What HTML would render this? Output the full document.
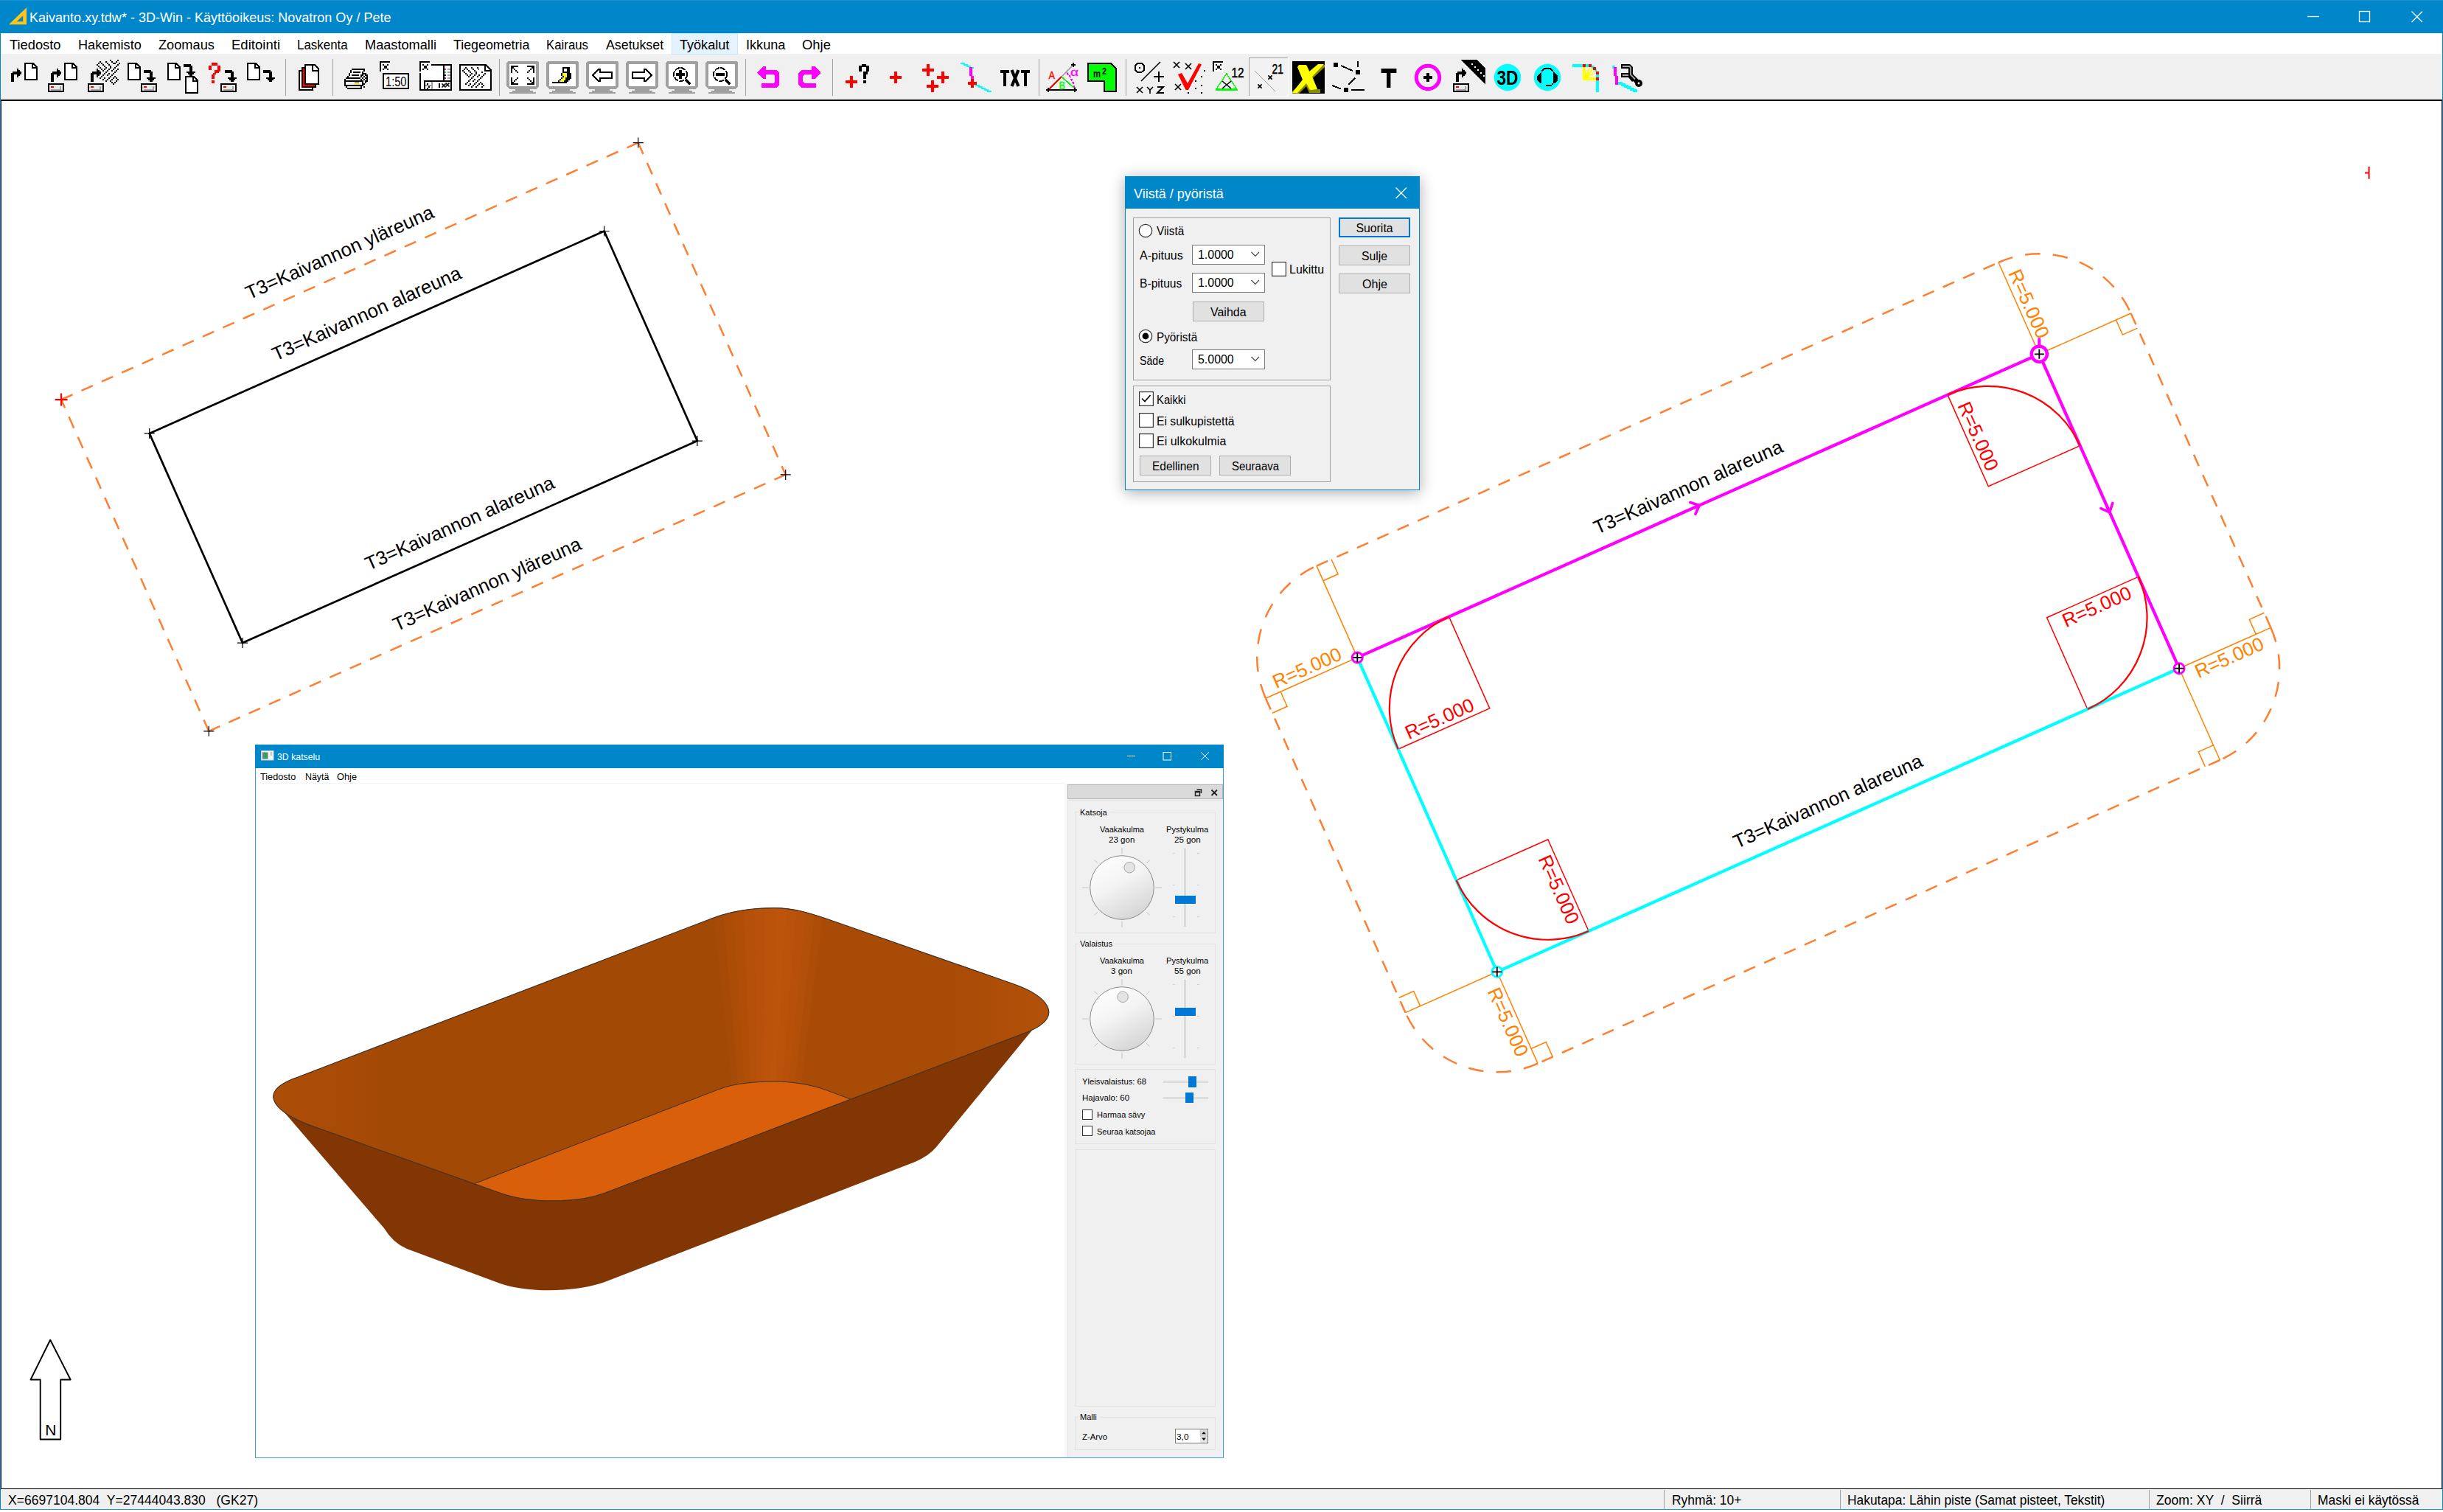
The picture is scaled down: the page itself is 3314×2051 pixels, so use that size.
<!DOCTYPE html>
<html lang="fi"><head><meta charset="utf-8"><title>3D-Win</title><style>
html,body{margin:0;padding:0;background:#fff;}
body{width:3314px;height:2051px;overflow:hidden;position:relative;font-family:"Liberation Sans",sans-serif;}
div,svg.abs,span.t{position:absolute;}
span.t{white-space:nowrap;line-height:1;transform-origin:0 0;display:block;}
svg{overflow:visible;}
svg text{font-family:"Liberation Sans",sans-serif;}
</style></head>
<body>
<div class="titlebar" style="left:0px;top:0px;width:3314px;height:45px;background:#0087c9;"></div><div style="left:0px;top:0px;width:3314px;height:1px;background:#1c92ce;"></div><svg class="abs" style="left:10px;top:8px" width="28" height="28" viewBox="0 0 28 28"><path d="M2 25.3 L26 2.3 L26 25.3 Z M12.6 21.3 L21.2 21.3 L21.2 13.2 Z" fill="#ffc61a" fill-rule="evenodd"/></svg><span class="t" style="left:40.40px;top:16.40px;font-size:17.6px;color:#fff;transform:scaleX(1.0244);">Kaivanto.xy.tdw* - 3D-Win - Käyttöoikeus: Novatron Oy / Pete</span><svg class="abs" style="left:3120px;top:8px" width="180" height="30" viewBox="0 0 180 30" fill="none" stroke="#fff" stroke-width="1.3"><path d="M10.2 14.5 H26"/><rect x="80.5" y="7.5" width="14" height="14"/><path d="M151.5 7.5 L166 22 M166 7.5 L151.5 22"/></svg><div class="menubar" style="left:0px;top:45px;width:3314px;height:28px;background:#fff;"></div><div class="toolbar" style="left:0px;top:73px;width:3314px;height:62px;background:#f0f0f0;"></div><div style="left:911px;top:45px;width:90px;height:29px;background:#e5f3ff;border:1px solid #cce8ff;box-sizing:border-box;"></div><span class="t" style="left:12.70px;top:53.30px;font-size:17.6px;transform:scaleX(1.0400);">Tiedosto</span><span class="t" style="left:105.70px;top:53.30px;font-size:17.6px;transform:scaleX(1.0324);">Hakemisto</span><span class="t" style="left:214.60px;top:53.30px;font-size:17.6px;transform:scaleX(1.0349);">Zoomaus</span><span class="t" style="left:313.70px;top:53.30px;font-size:17.6px;transform:scaleX(1.0544);">Editointi</span><span class="t" style="left:402.80px;top:53.30px;font-size:17.6px;transform:scaleX(0.9621);">Laskenta</span><span class="t" style="left:494.70px;top:53.30px;font-size:17.6px;transform:scaleX(1.0333);">Maastomalli</span><span class="t" style="left:614.90px;top:53.30px;font-size:17.6px;transform:scaleX(1.0124);">Tiegeometria</span><span class="t" style="left:741.40px;top:53.30px;font-size:17.6px;transform:scaleX(0.9555);">Kairaus</span><span class="t" style="left:821.60px;top:53.30px;font-size:17.6px;transform:scaleX(1.0108);">Asetukset</span><span class="t" style="left:922.40px;top:53.30px;font-size:17.6px;transform:scaleX(1.0270);">Työkalut</span><span class="t" style="left:1012.40px;top:53.30px;font-size:17.6px;transform:scaleX(1.0300);">Ikkuna</span><span class="t" style="left:1087.70px;top:53.30px;font-size:17.6px;transform:scaleX(1.0465);">Ohje</span><div class="canvas" style="left:1px;top:135px;width:3312px;height:1885px;background:#fff;border:1px solid #000;border-top-width:2px;box-sizing:border-box;"></div><div class="statusbar" style="left:0px;top:2020px;width:3314px;height:27px;background:#f0f0f0;"></div><div style="left:2257px;top:2021px;width:1px;height:26px;background:#a0a0a0;"></div><div style="left:2496px;top:2021px;width:1px;height:26px;background:#a0a0a0;"></div><div style="left:2915px;top:2021px;width:1px;height:26px;background:#a0a0a0;"></div><div style="left:3134px;top:2021px;width:1px;height:26px;background:#a0a0a0;"></div><span class="t" style="left:10.60px;top:2027.30px;font-size:17.6px;transform:scaleX(0.9967);white-space:pre;">X=6697104.804  Y=27444043.830   (GK27)</span><span class="t" style="left:2267.50px;top:2027.30px;font-size:17.6px;transform:scaleX(0.9899);">Ryhmä: 10+</span><span class="t" style="left:2506.40px;top:2027.30px;font-size:17.6px;transform:scaleX(0.9876);">Hakutapa: Lähin piste (Samat pisteet, Tekstit)</span><span class="t" style="left:2925.00px;top:2027.30px;font-size:17.6px;white-space:pre;">Zoom: XY  /  Siirrä</span><span class="t" style="left:3143.90px;top:2027.30px;font-size:17.6px;transform:scaleX(0.9896);">Maski ei käytössä</span><div style="left:0px;top:45px;width:1px;height:2003px;background:#0087c9;"></div><div style="left:3313px;top:45px;width:1px;height:2003px;background:#0087c9;"></div><div style="left:0px;top:2047px;width:3314px;height:1px;background:#1e93cf;"></div><div style="left:0px;top:2048px;width:3314px;height:3px;background:#fff;"></div><svg class="abs" style="left:0;top:0" width="2300" height="135" viewBox="0 0 2300 135" shape-rendering="crispEdges" font-family='"Liberation Sans", sans-serif'><rect x="15" y="99" width="4" height="12" fill="#000"/><rect x="17" y="97" width="7" height="4" fill="#000"/><rect x="23" y="93" width="2" height="12" fill="#000"/><rect x="25" y="95" width="2" height="8" fill="#000"/><rect x="27" y="97" width="2" height="4" fill="#000"/><polygon points="33,85 45,85 51,91 51,109 33,109" fill="#000" /><polygon points="35,87 44,87 49,92 49,107 35,107" fill="#fff" /><rect x="43" y="87" width="2" height="6" fill="#000"/><rect x="43" y="91" width="6" height="2" fill="#000"/><rect x="69" y="99" width="4" height="12" fill="#000"/><rect x="71" y="97" width="7" height="4" fill="#000"/><rect x="77" y="93" width="2" height="12" fill="#000"/><rect x="79" y="95" width="2" height="8" fill="#000"/><rect x="81" y="97" width="2" height="4" fill="#000"/><polygon points="87,85 99,85 105,91 105,109 87,109" fill="#000" /><polygon points="89,87 98,87 103,92 103,107 89,107" fill="#fff" /><rect x="97" y="87" width="2" height="6" fill="#000"/><rect x="97" y="91" width="6" height="2" fill="#000"/><rect x="65" y="113" width="22" height="12" fill="#000"/><rect x="67" y="115" width="18" height="8" fill="#e9e9e9"/><rect x="69" y="117" width="4" height="2" fill="#ff0000"/><rect x="69" y="121" width="14" height="2" fill="#a9a9a9"/><rect x="81" y="117" width="2" height="6" fill="#a9a9a9"/><path d="M135 83h2v2h-2zM143 83h2v2h-2zM151 83h2v2h-2zM157 83h2v2h-2zM133 85h2v2h-2zM137 85h2v2h-2zM145 85h2v2h-2zM153 85h2v2h-2zM155 85h2v2h-2zM131 87h2v2h-2zM139 87h2v2h-2zM147 87h2v2h-2zM133 89h2v2h-2zM141 89h2v2h-2zM149 89h2v2h-2zM157 89h2v2h-2zM135 91h2v2h-2zM143 91h2v2h-2zM149 91h2v2h-2zM137 93h2v2h-2zM141 93h2v2h-2zM147 93h2v2h-2zM153 93h2v2h-2zM159 93h2v2h-2zM139 95h2v2h-2zM145 95h2v2h-2zM151 95h2v2h-2zM157 95h2v2h-2zM143 97h2v2h-2zM155 97h2v2h-2zM141 99h2v2h-2zM147 99h2v2h-2zM153 99h2v2h-2zM139 101h2v2h-2zM145 101h2v2h-2zM151 101h2v2h-2zM137 103h2v2h-2zM149 103h2v2h-2zM155 103h2v2h-2zM135 105h2v2h-2zM141 105h2v2h-2zM147 105h2v2h-2zM153 105h2v2h-2zM157 105h2v2h-2zM139 107h2v2h-2zM145 107h2v2h-2zM151 107h2v2h-2zM159 107h2v2h-2zM143 109h2v2h-2zM149 109h2v2h-2zM157 109h2v2h-2zM149 81h2v2h-2zM159 81h2v2h-2zM161 85h2v2h-2zM159 87h2v2h-2zM155 91h2v2h-2zM151 111h2v2h-2zM155 111h2v2h-2zM153 113h2v2h-2z" fill="#000"/><rect x="123" y="99" width="4" height="12" fill="#000"/><rect x="125" y="97" width="7" height="4" fill="#000"/><rect x="131" y="93" width="2" height="12" fill="#000"/><rect x="133" y="95" width="2" height="8" fill="#000"/><rect x="135" y="97" width="2" height="4" fill="#000"/><rect x="119" y="113" width="22" height="12" fill="#000"/><rect x="121" y="115" width="18" height="8" fill="#e9e9e9"/><rect x="123" y="117" width="4" height="2" fill="#ff0000"/><rect x="123" y="121" width="14" height="2" fill="#a9a9a9"/><rect x="135" y="117" width="2" height="6" fill="#a9a9a9"/><polygon points="173,85 185,85 191,91 191,109 173,109" fill="#000" /><polygon points="175,87 184,87 189,92 189,107 175,107" fill="#fff" /><rect x="183" y="87" width="2" height="6" fill="#000"/><rect x="183" y="91" width="6" height="2" fill="#000"/><rect x="195" y="95" width="10" height="4" fill="#000"/><rect x="203" y="97" width="4" height="8" fill="#000"/><rect x="199" y="105" width="12" height="2" fill="#000"/><rect x="201" y="107" width="8" height="2" fill="#000"/><rect x="203" y="109" width="4" height="2" fill="#000"/><rect x="191" y="113" width="22" height="12" fill="#000"/><rect x="193" y="115" width="18" height="8" fill="#e9e9e9"/><rect x="195" y="117" width="4" height="2" fill="#ff0000"/><rect x="195" y="121" width="14" height="2" fill="#a9a9a9"/><rect x="207" y="117" width="2" height="6" fill="#a9a9a9"/><polygon points="227,85 239,85 245,91 245,109 227,109" fill="#000" /><polygon points="229,87 238,87 243,92 243,107 229,107" fill="#fff" /><rect x="237" y="87" width="2" height="6" fill="#000"/><rect x="237" y="91" width="6" height="2" fill="#000"/><rect x="249" y="87" width="10" height="4" fill="#000"/><rect x="257" y="89" width="4" height="8" fill="#000"/><rect x="253" y="97" width="12" height="2" fill="#000"/><rect x="255" y="99" width="8" height="2" fill="#000"/><rect x="257" y="101" width="4" height="2" fill="#000"/><polygon points="251,103 263,103 269,109 269,127 251,127" fill="#000" /><polygon points="253,105 262,105 267,110 267,125 253,125" fill="#fff" /><rect x="261" y="105" width="2" height="6" fill="#000"/><rect x="261" y="109" width="6" height="2" fill="#000"/><rect x="287" y="85" width="8" height="4" fill="#ff0000"/><rect x="283" y="89" width="4" height="6" fill="#ff0000"/><rect x="295" y="89" width="4" height="8" fill="#ff0000"/><rect x="291" y="95" width="6" height="4" fill="#ff0000"/><rect x="289" y="99" width="4" height="2" fill="#ff0000"/><rect x="287" y="101" width="4" height="6" fill="#ff0000"/><rect x="287" y="109" width="4" height="4" fill="#ff0000"/><rect x="305" y="95" width="10" height="4" fill="#000"/><rect x="313" y="97" width="4" height="8" fill="#000"/><rect x="309" y="105" width="12" height="2" fill="#000"/><rect x="311" y="107" width="8" height="2" fill="#000"/><rect x="313" y="109" width="4" height="2" fill="#000"/><rect x="299" y="113" width="22" height="12" fill="#000"/><rect x="301" y="115" width="18" height="8" fill="#e9e9e9"/><rect x="303" y="117" width="4" height="2" fill="#ff0000"/><rect x="303" y="121" width="14" height="2" fill="#a9a9a9"/><rect x="315" y="117" width="2" height="6" fill="#a9a9a9"/><polygon points="335,85 347,85 353,91 353,109 335,109" fill="#000" /><polygon points="337,87 346,87 351,92 351,107 337,107" fill="#fff" /><rect x="345" y="87" width="2" height="6" fill="#000"/><rect x="345" y="91" width="6" height="2" fill="#000"/><rect x="357" y="95" width="10" height="4" fill="#000"/><rect x="365" y="97" width="4" height="8" fill="#000"/><rect x="361" y="105" width="12" height="2" fill="#000"/><rect x="363" y="107" width="8" height="2" fill="#000"/><rect x="365" y="109" width="4" height="2" fill="#000"/><rect x="387" y="80" width="1" height="50" fill="#a0a0a0"/><polygon points="405,95 419,95 425,101 425,123 405,123" fill="#000" /><polygon points="407,97 418,97 423,102 423,121 407,121" fill="#fff" /><rect x="415" y="97" width="2" height="8" fill="#000"/><rect x="415" y="103" width="8" height="2" fill="#000"/><polygon points="417,97 418,97 423,102 423,103 417,103" fill="#fff" /><polygon points="409,91 423,91 429,97 429,119 409,119" fill="#000" /><polygon points="411,93 422,93 427,98 427,117 411,117" fill="#ff0000" /><rect x="419" y="93" width="2" height="8" fill="#000"/><rect x="419" y="99" width="8" height="2" fill="#000"/><polygon points="421,93 422,93 427,98 427,99 421,99" fill="#fff" /><polygon points="413,87 427,87 433,93 433,115 413,115" fill="#000" /><polygon points="415,89 426,89 431,94 431,113 415,113" fill="#fff" /><rect x="423" y="89" width="2" height="8" fill="#000"/><rect x="423" y="95" width="8" height="2" fill="#000"/><polygon points="425,89 426,89 431,94 431,95 425,95" fill="#fff" /><rect x="451" y="80" width="1" height="50" fill="#a0a0a0"/><path d="M477 93h2v2h-2zM479 93h2v2h-2zM481 93h2v2h-2zM483 93h2v2h-2zM485 93h2v2h-2zM487 93h2v2h-2zM489 93h2v2h-2zM491 93h2v2h-2zM493 93h2v2h-2zM475 95h2v2h-2zM493 95h2v2h-2zM475 97h2v2h-2zM479 97h2v2h-2zM481 97h2v2h-2zM483 97h2v2h-2zM485 97h2v2h-2zM487 97h2v2h-2zM491 97h2v2h-2zM473 99h2v2h-2zM491 99h2v2h-2zM493 99h2v2h-2zM495 99h2v2h-2zM473 101h2v2h-2zM477 101h2v2h-2zM479 101h2v2h-2zM481 101h2v2h-2zM483 101h2v2h-2zM485 101h2v2h-2zM489 101h2v2h-2zM491 101h2v2h-2zM495 101h2v2h-2zM497 101h2v2h-2zM471 103h2v2h-2zM489 103h2v2h-2zM493 103h2v2h-2zM497 103h2v2h-2zM469 105h2v2h-2zM471 105h2v2h-2zM473 105h2v2h-2zM475 105h2v2h-2zM477 105h2v2h-2zM479 105h2v2h-2zM481 105h2v2h-2zM483 105h2v2h-2zM485 105h2v2h-2zM487 105h2v2h-2zM491 105h2v2h-2zM495 105h2v2h-2zM497 105h2v2h-2zM467 107h2v2h-2zM489 107h2v2h-2zM493 107h2v2h-2zM497 107h2v2h-2zM467 109h2v2h-2zM469 109h2v2h-2zM471 109h2v2h-2zM473 109h2v2h-2zM475 109h2v2h-2zM477 109h2v2h-2zM479 109h2v2h-2zM481 109h2v2h-2zM483 109h2v2h-2zM485 109h2v2h-2zM487 109h2v2h-2zM489 109h2v2h-2zM491 109h2v2h-2zM495 109h2v2h-2zM497 109h2v2h-2zM467 111h2v2h-2zM491 111h2v2h-2zM495 111h2v2h-2zM467 113h2v2h-2zM491 113h2v2h-2zM493 113h2v2h-2zM467 115h2v2h-2zM469 115h2v2h-2zM471 115h2v2h-2zM473 115h2v2h-2zM475 115h2v2h-2zM477 115h2v2h-2zM479 115h2v2h-2zM481 115h2v2h-2zM483 115h2v2h-2zM485 115h2v2h-2zM487 115h2v2h-2zM489 115h2v2h-2zM491 115h2v2h-2zM469 117h2v2h-2zM489 117h2v2h-2zM493 117h2v2h-2zM471 119h2v2h-2zM473 119h2v2h-2zM475 119h2v2h-2zM477 119h2v2h-2zM479 119h2v2h-2zM481 119h2v2h-2zM483 119h2v2h-2zM485 119h2v2h-2zM487 119h2v2h-2zM489 119h2v2h-2z" fill="#000"/><path d="M477 95h2v2h-2zM479 95h2v2h-2zM481 95h2v2h-2zM483 95h2v2h-2zM485 95h2v2h-2zM487 95h2v2h-2zM489 95h2v2h-2zM491 95h2v2h-2zM477 97h2v2h-2zM489 97h2v2h-2zM475 99h2v2h-2zM477 99h2v2h-2zM479 99h2v2h-2zM481 99h2v2h-2zM483 99h2v2h-2zM485 99h2v2h-2zM487 99h2v2h-2zM489 99h2v2h-2zM475 101h2v2h-2zM487 101h2v2h-2zM493 101h2v2h-2zM473 103h2v2h-2zM475 103h2v2h-2zM477 103h2v2h-2zM479 103h2v2h-2zM481 103h2v2h-2zM483 103h2v2h-2zM485 103h2v2h-2zM487 103h2v2h-2zM491 103h2v2h-2zM495 103h2v2h-2zM489 105h2v2h-2zM493 105h2v2h-2zM469 107h2v2h-2zM471 107h2v2h-2zM473 107h2v2h-2zM475 107h2v2h-2zM477 107h2v2h-2zM479 107h2v2h-2zM481 107h2v2h-2zM483 107h2v2h-2zM485 107h2v2h-2zM487 107h2v2h-2zM491 107h2v2h-2zM495 107h2v2h-2zM493 109h2v2h-2zM493 111h2v2h-2zM493 115h2v2h-2zM471 117h2v2h-2zM473 117h2v2h-2zM475 117h2v2h-2zM477 117h2v2h-2zM479 117h2v2h-2zM481 117h2v2h-2zM483 117h2v2h-2zM485 117h2v2h-2zM487 117h2v2h-2zM491 117h2v2h-2z" fill="#fff"/><path d="M469 111h2v2h-2zM471 111h2v2h-2zM473 111h2v2h-2zM475 111h2v2h-2zM477 111h2v2h-2zM479 111h2v2h-2zM487 111h2v2h-2zM489 111h2v2h-2zM469 113h2v2h-2zM471 113h2v2h-2zM473 113h2v2h-2zM475 113h2v2h-2zM477 113h2v2h-2zM479 113h2v2h-2zM487 113h2v2h-2zM489 113h2v2h-2z" fill="#f2f2f2"/><path d="M481 111h2v2h-2zM483 111h2v2h-2zM485 111h2v2h-2z" fill="#9a9aa6"/><path d="M481 113h2v2h-2zM483 113h2v2h-2zM485 113h2v2h-2z" fill="#ffff00"/><rect x="517" y="85" width="12" height="12" fill="#fdfdfd"/><rect x="515" y="83" width="14" height="2" fill="#000"/><rect x="515" y="83" width="2" height="14" fill="#000"/><rect x="521" y="89" width="4" height="4" fill="#000"/><rect x="519" y="87" width="2" height="2" fill="#000"/><rect x="525" y="87" width="2" height="2" fill="#000"/><rect x="519" y="93" width="2" height="2" fill="#000"/><rect x="525" y="93" width="2" height="2" fill="#000"/><rect x="519" y="99" width="36" height="22" fill="#000"/><rect x="521" y="101" width="32" height="18" fill="#fff"/><text x="523" y="117" font-size="19" font-weight="normal" fill="#000" textLength="28.5" lengthAdjust="spacingAndGlyphs" shape-rendering="auto" >1:50</text><rect x="569" y="87" width="44" height="36" fill="#000"/><rect x="571" y="89" width="40" height="32" fill="#fff"/><rect x="571" y="85" width="12" height="12" fill="#fdfdfd"/><rect x="569" y="83" width="14" height="2" fill="#000"/><rect x="569" y="83" width="2" height="14" fill="#000"/><rect x="575" y="89" width="4" height="4" fill="#000"/><rect x="573" y="87" width="2" height="2" fill="#000"/><rect x="579" y="87" width="2" height="2" fill="#000"/><rect x="573" y="93" width="2" height="2" fill="#000"/><rect x="579" y="93" width="2" height="2" fill="#000"/><rect x="569" y="97" width="2" height="2" fill="#f0f0f0"/><rect x="583" y="85" width="2" height="4" fill="#f0f0f0"/><rect x="601" y="89" width="2" height="20" fill="#000"/><rect x="603" y="93" width="2" height="2" fill="#ff00ff"/><rect x="607" y="93" width="4" height="2" fill="#a0a0a0"/><rect x="603" y="97" width="2" height="2" fill="#00ff00"/><rect x="607" y="97" width="4" height="2" fill="#a0a0a0"/><rect x="603" y="101" width="2" height="2" fill="#0000ff"/><rect x="607" y="101" width="4" height="2" fill="#a0a0a0"/><rect x="603" y="105" width="2" height="2" fill="#ff0000"/><rect x="607" y="105" width="4" height="2" fill="#a0a0a0"/><rect x="575" y="109" width="36" height="2" fill="#000"/><rect x="575" y="109" width="2" height="12" fill="#000"/><rect x="585" y="111" width="2" height="10" fill="#a0a0a0"/><rect x="579" y="113" width="2" height="2" fill="#000"/><rect x="577" y="115" width="8" height="2" fill="#a0a0a0"/><rect x="581" y="117" width="2" height="2" fill="#000"/><rect x="579" y="119" width="2" height="2" fill="#000"/><rect x="595" y="113" width="2" height="6" fill="#000"/><path d="M599.5 113.5L604.5 118.5M604.5 113.5L599.5 118.5" fill="none" stroke="#000" stroke-width="1.7" shape-rendering="auto"/><path d="M604.5 112.5L609.5 117.5M609.5 112.5L604.5 117.5" fill="none" stroke="#000" stroke-width="1.7" shape-rendering="auto"/><polygon points="623,87 659,87 667,95 667,123 623,123" fill="#000" /><polygon points="625,89 658,89 665,96 665,121 625,121" fill="#fff" /><rect x="657" y="89" width="2" height="8" fill="#000"/><rect x="657" y="95" width="8" height="2" fill="#000"/><path d="M631 91h2v2h-2zM639 91h2v2h-2zM647 91h2v2h-2zM653 91h2v2h-2zM629 93h2v2h-2zM633 93h2v2h-2zM641 93h2v2h-2zM649 93h2v2h-2zM651 93h2v2h-2zM627 95h2v2h-2zM635 95h2v2h-2zM643 95h2v2h-2zM629 97h2v2h-2zM637 97h2v2h-2zM645 97h2v2h-2zM653 97h2v2h-2zM631 99h2v2h-2zM639 99h2v2h-2zM645 99h2v2h-2zM657 99h2v2h-2zM633 101h2v2h-2zM637 101h2v2h-2zM643 101h2v2h-2zM649 101h2v2h-2zM655 101h2v2h-2zM635 103h2v2h-2zM641 103h2v2h-2zM647 103h2v2h-2zM653 103h2v2h-2zM639 105h2v2h-2zM651 105h2v2h-2zM637 107h2v2h-2zM643 107h2v2h-2zM649 107h2v2h-2zM635 109h2v2h-2zM641 109h2v2h-2zM647 109h2v2h-2zM633 111h2v2h-2zM645 111h2v2h-2zM651 111h2v2h-2zM631 113h2v2h-2zM637 113h2v2h-2zM643 113h2v2h-2zM649 113h2v2h-2zM653 113h2v2h-2zM635 115h2v2h-2zM641 115h2v2h-2zM647 115h2v2h-2zM655 115h2v2h-2zM639 117h2v2h-2zM645 117h2v2h-2zM653 117h2v2h-2z" fill="#000"/><rect x="650" y="89" width="9" height="8" fill="#fff"/><rect x="657" y="89" width="2" height="8" fill="#000"/><rect x="657" y="95" width="8" height="2" fill="#000"/><rect x="677" y="80" width="1" height="50" fill="#a0a0a0"/><polygon points="689,83 729,83 731,85 731,117 727,121 691,121 687,117 687,85" fill="#a0a0a0" /><rect x="691" y="87" width="36" height="30" fill="#fff"/><rect x="699" y="121" width="20" height="2" fill="#a0a0a0"/><rect x="695" y="123" width="28" height="2" fill="#a0a0a0"/><rect x="691" y="125" width="36" height="2" fill="#a0a0a0"/><polygon points="743,83 783,83 785,85 785,117 781,121 745,121 741,117 741,85" fill="#a0a0a0" /><rect x="745" y="87" width="36" height="30" fill="#fff"/><rect x="753" y="121" width="20" height="2" fill="#a0a0a0"/><rect x="749" y="123" width="28" height="2" fill="#a0a0a0"/><rect x="745" y="125" width="36" height="2" fill="#a0a0a0"/><polygon points="797,83 837,83 839,85 839,117 835,121 799,121 795,117 795,85" fill="#a0a0a0" /><rect x="799" y="87" width="36" height="30" fill="#fff"/><rect x="807" y="121" width="20" height="2" fill="#a0a0a0"/><rect x="803" y="123" width="28" height="2" fill="#a0a0a0"/><rect x="799" y="125" width="36" height="2" fill="#a0a0a0"/><polygon points="851,83 891,83 893,85 893,117 889,121 853,121 849,117 849,85" fill="#a0a0a0" /><rect x="853" y="87" width="36" height="30" fill="#fff"/><rect x="861" y="121" width="20" height="2" fill="#a0a0a0"/><rect x="857" y="123" width="28" height="2" fill="#a0a0a0"/><rect x="853" y="125" width="36" height="2" fill="#a0a0a0"/><polygon points="905,83 945,83 947,85 947,117 943,121 907,121 903,117 903,85" fill="#a0a0a0" /><rect x="907" y="87" width="36" height="30" fill="#fff"/><rect x="915" y="121" width="20" height="2" fill="#a0a0a0"/><rect x="911" y="123" width="28" height="2" fill="#a0a0a0"/><rect x="907" y="125" width="36" height="2" fill="#a0a0a0"/><polygon points="959,83 999,83 1001,85 1001,117 997,121 961,121 957,117 957,85" fill="#a0a0a0" /><rect x="961" y="87" width="36" height="30" fill="#fff"/><rect x="969" y="121" width="20" height="2" fill="#a0a0a0"/><rect x="965" y="123" width="28" height="2" fill="#a0a0a0"/><rect x="961" y="125" width="36" height="2" fill="#a0a0a0"/><rect x="693" y="89" width="10" height="2" fill="#000"/><rect x="693" y="89" width="2" height="10" fill="#000"/><rect x="695" y="91" width="2" height="2" fill="#000"/><rect x="697" y="93" width="2" height="2" fill="#000"/><rect x="699" y="95" width="2" height="2" fill="#000"/><rect x="701" y="97" width="2" height="2" fill="#000"/><rect x="715" y="89" width="10" height="2" fill="#000"/><rect x="723" y="89" width="2" height="10" fill="#000"/><rect x="721" y="91" width="2" height="2" fill="#000"/><rect x="719" y="93" width="2" height="2" fill="#000"/><rect x="717" y="95" width="2" height="2" fill="#000"/><rect x="715" y="97" width="2" height="2" fill="#000"/><rect x="693" y="113" width="10" height="2" fill="#000"/><rect x="693" y="105" width="2" height="10" fill="#000"/><rect x="695" y="111" width="2" height="2" fill="#000"/><rect x="697" y="109" width="2" height="2" fill="#000"/><rect x="699" y="107" width="2" height="2" fill="#000"/><rect x="701" y="105" width="2" height="2" fill="#000"/><rect x="715" y="113" width="10" height="2" fill="#000"/><rect x="723" y="105" width="2" height="10" fill="#000"/><rect x="721" y="111" width="2" height="2" fill="#000"/><rect x="719" y="109" width="2" height="2" fill="#000"/><rect x="717" y="107" width="2" height="2" fill="#000"/><rect x="715" y="105" width="2" height="2" fill="#000"/><rect x="763" y="91" width="10" height="8" fill="#000"/><rect x="765" y="93" width="4" height="4" fill="#fff"/><polygon points="761,99 775,99 775,107 773,107 773,109 771,109 771,111 769,111 769,113 749,113 749,111 757,111 757,109 759,109 759,107 761,107 761,105 763,105 763,103 761,103" fill="#000" /><polygon points="763,99 769,99 769,105 767,105 767,109 765,109 765,111 759,111 759,109 761,109 761,107 763,107 763,105 765,105 765,103 763,103" fill="#ffff00" /><polygon points="804,102 812,94 814,94 814,98 829.7,98 829.7,106 814,106 814,110 812,110" fill="#fff" stroke="#000" stroke-width="2" stroke-linejoin="miter"/><polygon points="884,102 876,94 874,94 874,98 858.3,98 858.3,106 874,106 874,110 876,110" fill="#fff" stroke="#000" stroke-width="2" stroke-linejoin="miter"/><circle cx="923" cy="101" r="9" fill="#fff" stroke="#000" stroke-width="2" stroke-dasharray="7 1.5"/><path d="M930 108L936.5 114.5" fill="none" stroke="#000" stroke-width="4.2" /><rect x="917" y="99" width="12" height="4" fill="#000"/><rect x="921" y="95" width="4" height="12" fill="#000"/><circle cx="977" cy="101" r="9" fill="#fff" stroke="#000" stroke-width="2" stroke-dasharray="7 1.5"/><path d="M984 108L990.5 114.5" fill="none" stroke="#000" stroke-width="4.2" /><rect x="971" y="99" width="12" height="4" fill="#000"/><rect x="1011" y="80" width="1" height="50" fill="#a0a0a0"/><polygon points="1027,98 1029,96 1031,94 1033,92 1035,90 1039,90 1039,95 1053,95 1057,99 1057,115 1053,119 1033,119 1033,113 1049,113 1051,111 1051,103 1049,101 1039,101 1039,107 1035,107 1033,105 1031,103 1029,101 1027,99" fill="#ff00ff" /><polygon points="1113,98 1111,96 1109,94 1107,92 1105,90 1101,90 1101,95 1087,95 1083,99 1083,115 1087,119 1107,119 1107,113 1091,113 1089,111 1089,103 1091,101 1101,101 1101,107 1105,107 1107,105 1109,103 1111,101 1113,99" fill="#ff00ff" /><rect x="1129" y="80" width="1" height="50" fill="#a0a0a0"/><rect x="1153.0" y="103" width="4" height="16" fill="#ff0000"/><rect x="1147" y="109.0" width="16" height="4" fill="#ff0000"/><rect x="1169" y="87" width="6" height="4" fill="#000"/><rect x="1165" y="89" width="4" height="8" fill="#000"/><rect x="1175" y="89" width="4" height="8" fill="#000"/><rect x="1171" y="97" width="6" height="4" fill="#000"/><rect x="1171" y="101" width="4" height="6" fill="#000"/><rect x="1171" y="109" width="4" height="4" fill="#000"/><rect x="1213.0" y="97" width="4" height="16" fill="#ff0000"/><rect x="1207" y="103.0" width="16" height="4" fill="#ff0000"/><rect x="1257.0" y="87" width="4" height="16" fill="#ff0000"/><rect x="1251" y="93.0" width="16" height="4" fill="#ff0000"/><rect x="1277.0" y="97" width="4" height="16" fill="#ff0000"/><rect x="1271" y="103.0" width="16" height="4" fill="#ff0000"/><rect x="1263.0" y="109" width="4" height="16" fill="#ff0000"/><rect x="1257" y="115.0" width="16" height="4" fill="#ff0000"/><rect x="1303" y="85" width="6" height="2" fill="#00ffff"/><rect x="1307" y="87" width="6" height="2" fill="#00ffff"/><rect x="1311" y="89" width="6" height="2" fill="#00ffff"/><rect x="1315" y="91" width="6" height="2" fill="#00ffff"/><rect x="1315" y="91" width="4" height="12" fill="#ff00ff"/><rect x="1317" y="103" width="4" height="4" fill="#ff00ff"/><rect x="1317.0" y="107" width="4" height="12" fill="#ff0000"/><rect x="1313" y="111.0" width="12" height="4" fill="#ff0000"/><rect x="1323" y="115" width="6" height="2" fill="#00ffff"/><rect x="1327" y="117" width="6" height="2" fill="#00ffff"/><rect x="1331" y="119" width="6" height="2" fill="#00ffff"/><rect x="1335" y="121" width="6" height="2" fill="#00ffff"/><rect x="1339" y="123" width="6" height="2" fill="#00ffff"/><rect x="1357" y="95" width="12" height="4" fill="#000"/><rect x="1361" y="95" width="4" height="22" fill="#000"/><rect x="1385" y="95" width="12" height="4" fill="#000"/><rect x="1389" y="95" width="4" height="22" fill="#000"/><path d="M1372.5 95L1381.5 117M1381.5 95L1372.5 117" fill="none" stroke="#000" stroke-width="4.2" shape-rendering="auto"/><rect x="1409" y="80" width="1" height="50" fill="#a0a0a0"/><rect x="1419" y="121" width="42" height="2" fill="#000"/><rect x="1421" y="119" width="2" height="6" fill="#000"/><rect x="1457" y="119" width="2" height="6" fill="#000"/><rect x="1453" y="87" width="6" height="2" fill="#000"/><rect x="1455" y="85" width="2" height="6" fill="#000"/><path d="M1423 121L1440 104" fill="none" stroke="#ff0000" stroke-width="1.8" /><path d="M1441 103L1454 90" fill="none" stroke="#909090" stroke-width="1.5" shape-rendering="auto"/><path d="M1441 105L1457 119" fill="none" stroke="#00ff00" stroke-width="1.8" /><path d="M1447 99Q1455 106 1458 120" fill="none" stroke="#ff00ff" stroke-width="2" stroke-dasharray="3 2"/><text x="1422.5" y="106.7" font-size="15.5" font-weight="normal" fill="#ff0000" textLength="8.5" lengthAdjust="spacingAndGlyphs" shape-rendering="auto" stroke="#ff0000" stroke-width="0.4">A</text><text x="1436.5" y="120.8" font-size="15.5" font-weight="normal" fill="#00ff00" textLength="8.5" lengthAdjust="spacingAndGlyphs" shape-rendering="auto" stroke="#00ff00" stroke-width="0.4">B</text><text x="1452" y="103" font-size="15" font-weight="normal" fill="#ff00ff" textLength="11" lengthAdjust="spacingAndGlyphs" shape-rendering="auto" stroke="#ff00ff" stroke-width="0.3">α</text><polygon points="1476,86 1507,86 1514,93 1514,124 1498,124 1498,110 1476,110" fill="#00ff00" stroke="#000" stroke-width="2" /><text x="1483" y="104.8" font-size="14.5" font-weight="bold" fill="#000" textLength="10" lengthAdjust="spacingAndGlyphs" shape-rendering="auto" >m</text><text x="1495" y="100.6" font-size="12.5" font-weight="bold" fill="#000" textLength="6" lengthAdjust="spacingAndGlyphs" shape-rendering="auto" >2</text><rect x="1527" y="80" width="1" height="50" fill="#a0a0a0"/><circle cx="1546" cy="92" r="6.5" fill="none" stroke="#000" stroke-width="2"/><rect x="1545" y="91" width="2" height="2" fill="#000"/><path d="M1574 84L1548 110" fill="none" stroke="#000" stroke-width="1.6" shape-rendering="auto"/><rect x="1565" y="103" width="14" height="2" fill="#000"/><rect x="1571" y="97" width="2" height="14" fill="#000"/><path d="M1542 118L1550 126M1550 118L1542 126" fill="none" stroke="#000" stroke-width="1.6" shape-rendering="auto"/><path d="M1556 118L1560 122L1564 118M1560 122V127" fill="none" stroke="#000" stroke-width="1.6" shape-rendering="auto"/><path d="M1570 118H1578L1570 126H1579" fill="none" stroke="#000" stroke-width="2" shape-rendering="auto"/><path d="M1592 84L1600 92M1600 84L1592 92" fill="none" stroke="#000" stroke-width="1.7" shape-rendering="auto"/><path d="M1608 86L1616 94M1616 86L1608 94" fill="none" stroke="#000" stroke-width="1.7" shape-rendering="auto"/><path d="M1594 114L1602 122M1602 114L1594 122" fill="none" stroke="#000" stroke-width="1.7" shape-rendering="auto"/><rect x="1633" y="95" width="2" height="2" fill="#000"/><rect x="1629" y="103" width="2" height="2" fill="#000"/><rect x="1621" y="109" width="2" height="2" fill="#000"/><rect x="1629" y="115" width="2" height="2" fill="#000"/><rect x="1621" y="119" width="2" height="2" fill="#000"/><rect x="1611" y="125" width="2" height="2" fill="#000"/><rect x="1629" y="125" width="2" height="2" fill="#000"/><path d="M1598 101L1603 99L1611 113L1626 86L1630 87.5L1612 122L1608.5 122Z" fill="#ff0000" shape-rendering="auto"/><rect x="1647" y="85" width="12" height="12" fill="#fdfdfd"/><rect x="1645" y="83" width="14" height="2" fill="#000"/><rect x="1645" y="83" width="2" height="14" fill="#000"/><rect x="1651" y="89" width="4" height="4" fill="#000"/><rect x="1649" y="87" width="2" height="2" fill="#000"/><rect x="1655" y="87" width="2" height="2" fill="#000"/><rect x="1649" y="93" width="2" height="2" fill="#000"/><rect x="1655" y="93" width="2" height="2" fill="#000"/><path d="M1664 100L1650 121H1678Z" fill="none" stroke="#00ff00" stroke-width="1.4" /><rect x="1649" y="121" width="30" height="2" fill="#00ff00"/><path d="M1658 110L1670 120M1670 110L1658 120" fill="none" stroke="#000" stroke-width="1.6" shape-rendering="auto"/><text x="1670.5" y="104.7" font-size="19" font-weight="normal" fill="#000" textLength="17" lengthAdjust="spacingAndGlyphs" shape-rendering="auto" stroke="#000" stroke-width="0.5">12</text><rect x="1694" y="78" width="53" height="53" fill="#f2f2f2"/><rect x="1694" y="78" width="53" height="1" fill="#a0a0a0"/><rect x="1694" y="78" width="1" height="53" fill="#a0a0a0"/><rect x="1694" y="130" width="54" height="1" fill="#fff"/><rect x="1747" y="78" width="1" height="53" fill="#fff"/><path d="M1702 96L1730 124" fill="none" stroke="#a0a0a0" stroke-width="1.4" /><path d="M1720.4 102.4L1725.6 107.6M1725.6 102.4L1720.4 107.6" fill="none" stroke="#000" stroke-width="1.7" shape-rendering="auto"/><path d="M1706.4 114.4L1711.6 119.6M1711.6 114.4L1706.4 119.6" fill="none" stroke="#000" stroke-width="1.7" shape-rendering="auto"/><text x="1725.5" y="99.5" font-size="18.5" font-weight="normal" fill="#000" textLength="15.5" lengthAdjust="spacingAndGlyphs" shape-rendering="auto" stroke="#000" stroke-width="0.5">21</text><rect x="1753" y="83" width="44" height="44" fill="#000"/><path d="M1763 89L1773 89L1777 98L1789 88L1797 88L1797 91L1781 106L1787 121L1791 121L1791 126L1776 126L1772 117L1762 127L1753 127L1753 124L1768 109L1761 92Z" fill="#8a8a00" shape-rendering="auto"/><path d="M1762 88L1772 88L1776 97L1788 87L1796 87L1780 104L1787 121L1777 122L1772 113L1760 126L1753 126L1767 108L1760 91Z" fill="#ffff00" shape-rendering="auto"/><rect x="1809" y="85" width="6" height="6" fill="#000"/><rect x="1839" y="95" width="6" height="6" fill="#000"/><rect x="1823" y="119" width="6" height="6" fill="#000"/><path d="M1819 89L1835 96" fill="none" stroke="#000" stroke-width="2" /><rect x="1841" y="83" width="2" height="8" fill="#000"/><path d="M1838 106L1829 115" fill="none" stroke="#000" stroke-width="2" /><path d="M1807 116L1819 120.5" fill="none" stroke="#000" stroke-width="2" /><rect x="1833" y="121" width="18" height="2" fill="#000"/><rect x="1873" y="93" width="22" height="6" fill="#000"/><rect x="1881" y="99" width="6" height="20" fill="#000"/><rect x="1873" y="93" width="1" height="6" fill="#909090"/><rect x="1894" y="93" width="1" height="6" fill="#909090"/><rect x="1886" y="99" width="1" height="20" fill="#909090"/><circle cx="1937" cy="105" r="15.7" fill="none" stroke="#ff00ff" stroke-width="5" shape-rendering="auto"/><rect x="1931" y="103" width="12" height="4" fill="#000"/><rect x="1935" y="99" width="4" height="12" fill="#000"/><rect x="1975" y="99" width="4" height="12" fill="#000"/><rect x="1977" y="97" width="7" height="4" fill="#000"/><rect x="1983" y="93" width="2" height="12" fill="#000"/><rect x="1985" y="95" width="2" height="8" fill="#000"/><rect x="1987" y="97" width="2" height="4" fill="#000"/><rect x="1971" y="113" width="22" height="12" fill="#000"/><rect x="1973" y="115" width="18" height="8" fill="#e9e9e9"/><rect x="1975" y="117" width="4" height="2" fill="#ff0000"/><rect x="1975" y="121" width="14" height="2" fill="#a9a9a9"/><rect x="1987" y="117" width="2" height="6" fill="#a9a9a9"/><polygon points="1981,81 2003,81 2015,93 2015,115" fill="#000" /><rect x="1996" y="86" width="2" height="2" fill="#fff"/><rect x="2000" y="90" width="2" height="2" fill="#fff"/><rect x="2004" y="94" width="2" height="2" fill="#fff"/><rect x="2008" y="98" width="2" height="2" fill="#fff"/><rect x="2012" y="102" width="2" height="2" fill="#fff"/><circle cx="2045" cy="105" r="18.2" fill="#00ffff" shape-rendering="auto"/><text x="2030.5" y="114.8" font-size="27" font-weight="bold" fill="#000" textLength="29" lengthAdjust="spacingAndGlyphs" shape-rendering="auto" >3D</text><circle cx="2099" cy="105" r="18.2" fill="#00ffff" shape-rendering="auto"/><path d="M2091 97L2095 93H2103L2107 97" fill="none" stroke="#000" stroke-width="2"/><polygon points="2091,97 2091,113 2089,113 2085,109 2085,103 2089,99" fill="#000" /><polygon points="2107,97 2107,113 2109,113 2113,109 2113,103 2109,99" fill="#000" /><rect x="2097" y="115" width="8" height="2" fill="#000"/><rect x="2105" y="113" width="2" height="2" fill="#000"/><rect x="2133" y="87" width="26" height="4" fill="#00ffff"/><rect x="2165" y="97" width="4" height="28" fill="#00ffff"/><rect x="2147" y="91" width="4" height="18" fill="#ffff00"/><rect x="2147" y="105" width="18" height="4" fill="#ffff00"/><path d="M2151 105L2161 93M2151 105L2163 99M2151 105L2156 92" fill="none" stroke="#ffff00" stroke-width="2" /><rect x="2159" y="89" width="4" height="4" fill="#00ffff"/><rect x="2163" y="93" width="3" height="4" fill="#00ffff"/><rect x="2147" y="87" width="4" height="4" fill="#ff0000"/><rect x="2155" y="87" width="4" height="4" fill="#ff0000"/><rect x="2161" y="91" width="4" height="4" fill="#ff0000"/><rect x="2165" y="97" width="4" height="4" fill="#ff0000"/><rect x="2165" y="105" width="4" height="4" fill="#ff0000"/><rect x="2187" y="89" width="4" height="4" fill="#00ffff"/><rect x="2189" y="91" width="4" height="12" fill="#ff00ff"/><rect x="2191" y="103" width="4" height="12" fill="#ff00ff"/><rect x="2195" y="111" width="6" height="4" fill="#00ffff"/><rect x="2199" y="113" width="6" height="4" fill="#00ffff"/><rect x="2203" y="115" width="6" height="4" fill="#00ffff"/><rect x="2207" y="117" width="6" height="4" fill="#00ffff"/><rect x="2211" y="119" width="6" height="4" fill="#00ffff"/><rect x="2215" y="121" width="6" height="4" fill="#00ffff"/><path d="M2200 87H2211L2215 90V101L2226 110.5" fill="none" stroke="#000" stroke-width="0.01"/><path d="M2199 87H2211L2215 91V102L2219 106L2214 111L2209 105H2199V99H2209V93H2199Z" fill="#000" shape-rendering="auto"/><path d="M2213 103L2223 113" stroke="#000" stroke-width="6.5" shape-rendering="auto"/><circle cx="2223" cy="113" r="5" fill="#000" shape-rendering="auto"/><circle cx="2223" cy="113" r="1.4" fill="#fff" shape-rendering="auto"/><path d="M2201 90H2210.5L2212 92V101.5L2218 107.5M2201 102H2209" fill="none" stroke="#a8a8a8" stroke-width="1.8" shape-rendering="auto"/></svg><svg class="abs" style="left:0;top:0" width="3314" height="2051" viewBox="0 0 3314 2051" font-family='"Liberation Sans", sans-serif'><path d="M83.1 542.1L865.7 193.6" stroke="#ff7f32" stroke-width="2.5" stroke-dasharray="16.8 13.2" fill="none"/><path d="M865.7 193.6L1065.7 643.9" stroke="#ff7f32" stroke-width="2.5" stroke-dasharray="16.8 13.2" fill="none"/><path d="M1065.7 643.9L283.3 991.8" stroke="#ff7f32" stroke-width="2.5" stroke-dasharray="16.8 13.2" fill="none"/><path d="M283.3 991.8L83.1 542.1" stroke="#ff7f32" stroke-width="2.5" stroke-dasharray="16.8 13.2" fill="none"/><path d="M202.7 587.9L819.6 313.5L945.9 598.1L329.0 872.1Z" stroke="#000" stroke-width="2.7" fill="none" stroke-linejoin="round"/><path d="M858.7 193.6H872.7M865.7 186.6V200.6" stroke="#000" stroke-width="1.2" fill="none"/><path d="M1058.7 643.9H1072.7M1065.7 636.9V650.9" stroke="#000" stroke-width="1.2" fill="none"/><path d="M276.3 991.8H290.3M283.3 984.8V998.8" stroke="#000" stroke-width="1.2" fill="none"/><path d="M195.7 587.9H209.7M202.7 580.9V594.9" stroke="#000" stroke-width="1.2" fill="none"/><path d="M812.6 313.5H826.6M819.6 306.5V320.5" stroke="#000" stroke-width="1.2" fill="none"/><path d="M938.9 598.1H952.9M945.9 591.1V605.1" stroke="#000" stroke-width="1.2" fill="none"/><path d="M322.0 872.1H336.0M329.0 865.1V879.1" stroke="#000" stroke-width="1.2" fill="none"/><path d="M74.6 542.1H91.6M83.1 533.6V550.6" stroke="#ff0000" stroke-width="2.2" fill="none"/><text transform="translate(338.0 406.7) rotate(-24.00)" font-size="26.1" fill="#000">T3=Kaivannon yläreuna</text><text transform="translate(374.0 489.9) rotate(-24.00)" font-size="26.1" fill="#000">T3=Kaivannon alareuna</text><text transform="translate(500.3 774.3) rotate(-24.00)" font-size="26.1" fill="#000">T3=Kaivannon alareuna</text><text transform="translate(538.1 856.7) rotate(-24.00)" font-size="26.1" fill="#000">T3=Kaivannon yläreuna</text><path d="M1786.0 767.6L2711.0 356.0M2890.6 425.0L3080.4 851.4M3011.4 1031.0L2086.1 1442.6M1906.5 1373.6L1717.0 947.2" stroke="#ff7f32" stroke-width="2.5" stroke-dasharray="16.8 13.2" fill="none"/><path d="M2711.0 356.0A136 136 0 0 1 2890.6 425.0M3080.4 851.4A136 136 0 0 1 3011.4 1031.0M2086.1 1442.6A136 136 0 0 1 1906.5 1373.6M1717.0 947.2A136 136 0 0 1 1786.0 767.6" stroke="#ff7f32" stroke-width="2.5" stroke-dasharray="20.5 17.2" fill="none"/><path d="M2711.0 356.0L2766.3 480.3L2890.6 425.0M2870.5 434.0L2879.4 454.1L2899.5 445.1M3080.4 851.4L2956.1 906.7L3011.4 1031.0M3060.3 860.4L3051.3 840.3L3071.4 831.3M3002.4 1010.9L2982.3 1019.8L2991.3 1039.9M2086.1 1442.6L2030.8 1318.3L1906.5 1373.6M2077.1 1422.5L2097.2 1413.5L2106.2 1433.6M1926.6 1364.6L1917.7 1344.5L1897.6 1353.5M1717.0 947.2L1841.3 891.9L1786.0 767.6M1737.1 938.2L1746.1 958.3L1726.0 967.3M1795.0 787.7L1815.1 778.8L1806.1 758.7" stroke="#ff8200" stroke-width="1.5" fill="none"/><path d="M2642.0 535.6L2697.3 659.8L2821.6 604.6M2900.8 782.4L2776.6 837.7L2831.8 962.0M2155.1 1263.0L2099.8 1138.8L1975.5 1194.0M1896.6 1016.2L2020.8 960.9L1965.6 836.6" stroke="#ff0000" stroke-width="1.5" fill="none"/><path d="M2956.1 906.7L2030.8 1318.3L1841.3 891.9" stroke="#00ffff" stroke-width="4.2" fill="none" stroke-linejoin="round"/><path d="M1841.3 891.9L2766.3 480.3L2956.1 906.7" stroke="#ff00ff" stroke-width="4.2" fill="none" stroke-linejoin="round"/><path d="M2642.0 535.6A136 136 0 0 1 2821.6 604.6M2900.8 782.4A136 136 0 0 1 2831.8 962.0M2155.1 1263.0A136 136 0 0 1 1975.5 1194.0M1896.6 1016.2A136 136 0 0 1 1965.6 836.6" stroke="#ff0000" stroke-width="2.2" fill="none"/><path d="M2305.2 685.5L2292.8 681.5M2305.2 685.5L2299.9 697.4" stroke="#ff00ff" stroke-width="3.6" stroke-linecap="round" fill="none"/><path d="M2861.8 694.9L2865.8 682.5M2861.8 694.9L2849.9 689.6" stroke="#ff00ff" stroke-width="3.6" stroke-linecap="round" fill="none"/><path d="M2766.3 460.3V470.3" stroke="#ff00ff" stroke-width="4" stroke-linecap="round"/><circle cx="2766.3" cy="480.3" r="10.6" fill="#fff0ff" stroke="#ff00ff" stroke-width="4.4"/><path d="M2759.8 480.3H2772.8M2766.3 473.8V486.8" stroke="#000" stroke-width="1.8" fill="none"/><circle cx="1841.3" cy="891.9" r="7" fill="#fff0ff" stroke="#ff00ff" stroke-width="3"/><path d="M1834.8 891.9H1847.8M1841.3 885.4V898.4" stroke="#000" stroke-width="1.8" fill="none"/><circle cx="2956.1" cy="906.7" r="7" fill="#fff0ff" stroke="#ff00ff" stroke-width="3"/><path d="M2949.6 906.7H2962.6M2956.1 900.2V913.2" stroke="#000" stroke-width="1.8" fill="none"/><circle cx="2030.8" cy="1318.3" r="7" fill="#fff0ff" stroke="#00ffff" stroke-width="3"/><path d="M2024.3 1318.3H2037.3M2030.8 1311.8V1324.8" stroke="#000" stroke-width="1.8" fill="none"/><text transform="translate(2166.7 725.2) rotate(-23.99)" font-size="26.1" fill="#000">T3=Kaivannon alareuna</text><text transform="translate(2356.3 1151.6) rotate(-23.99)" font-size="26.1" fill="#000">T3=Kaivannon alareuna</text><text transform="translate(2723.9 370.3) rotate(66.01)" font-size="26.1" fill="#ff8200">R=5.000</text><text transform="translate(2982.2 920.3) rotate(-23.99)" font-size="26.1" fill="#ff8200">R=5.000</text><text transform="translate(2017.2 1344.4) rotate(66.01)" font-size="26.1" fill="#ff8200">R=5.000</text><text transform="translate(1731.3 934.3) rotate(-23.99)" font-size="26.1" fill="#ff8200">R=5.000</text><text transform="translate(2655.0 549.9) rotate(66.01)" font-size="26.1" fill="#ff0000">R=5.000</text><text transform="translate(2802.6 851.3) rotate(-23.99)" font-size="26.1" fill="#ff0000">R=5.000</text><text transform="translate(2086.2 1164.8) rotate(66.01)" font-size="26.1" fill="#ff0000">R=5.000</text><text transform="translate(1910.9 1003.2) rotate(-23.99)" font-size="26.1" fill="#ff0000">R=5.000</text><path d="M3208 234.4H3213.6M3213.6 226V242.7" stroke="#ff0000" stroke-width="2" fill="none"/><path d="M68.2 1817.5L95.7 1871.5H82.2V1952.5H54.7V1871.5H41.5Z" stroke="#000" stroke-width="1.9" fill="#fff" stroke-linejoin="round"/><text x="68.8" y="1947" font-size="21" text-anchor="middle" fill="#000">N</text></svg><div class="win3d" style="left:346px;top:1010px;width:1314px;height:968px;background:#fff;border:1px solid #3a9fd5;box-sizing:border-box;"></div><div style="left:346px;top:1010px;width:1314px;height:32px;background:#0087c9;"></div><svg class="abs" style="left:354px;top:1018px" width="18" height="14" viewBox="0 0 18 14"><rect x=".5" y=".5" width="16.5" height="12.5" fill="#f4f4f4" stroke="#c9d3d9"/><rect x="2" y="2.5" width="7.5" height="9" fill="#3f9a5a"/><rect x="2" y="2.5" width="3" height="9" fill="#5b86a6" opacity=".6"/><rect x="13" y="2" width="1.6" height="5" fill="#9fb7c4"/></svg><span class="t" style="left:376.10px;top:1020.94px;font-size:12px;color:#fff;transform:scaleX(1.0264);">3D katselu</span><svg class="abs" style="left:1520px;top:1014px" width="130" height="24" viewBox="0 0 130 24" fill="none" stroke="#fff" stroke-width="1"><path d="M9 11.5H20"/><rect x="58" y="6.5" width="10.5" height="10.5"/><path d="M109 6.3L120 17M120 6.3L109 17"/></svg><span class="t" style="left:353.00px;top:1047.63px;font-size:12.6px;transform:scaleX(1.0074);">Tiedosto</span><span class="t" style="left:413.70px;top:1047.63px;font-size:12.6px;transform:scaleX(0.9846);">Näytä</span><span class="t" style="left:457.40px;top:1047.63px;font-size:12.6px;transform:scaleX(1.0147);">Ohje</span><div style="left:347px;top:1062px;width:1097px;height:1px;background:#f4f4f4;"></div><div style="left:1444px;top:1063px;width:215px;height:914px;background:#f0f0f0;"></div><div style="left:1444px;top:1063px;width:4px;height:914px;background:#f8f8f8;"></div><div style="left:1448px;top:1064px;width:211px;height:20px;background:#dadada;border:1px solid #b4b4b4;box-sizing:border-box;"></div><svg class="abs" style="left:1619px;top:1068px" width="36" height="14" viewBox="0 0 36 14" fill="none" stroke="#222" stroke-width="1.5"><path d="M4.5 3H10.5V8M2.5 5.5H8.5V11.5H2.5Z"/><path d="M2.5 6.3H8.5" stroke-width="2"/><path d="M24.5 3.5L32 11M32 3.5L24.5 11" stroke-width="1.8"/></svg><div style="left:1448px;top:1085px;width:211px;height:892px;border:1px solid #e3e3e3;border-right:none;border-bottom:none;box-sizing:border-box;"></div><div style="left:1458px;top:1101px;width:191px;height:165px;border:1px solid #e2e2e2;box-sizing:border-box;"></div><div style="left:1463px;top:1098px;width:41.5px;height:7px;background:#f0f0f0;"></div><span class="t" style="left:1465.10px;top:1096.77px;font-size:10.9px;transform:scaleX(1.0047);">Katsoja</span><span class="t" style="left:1491.50px;top:1120.47px;font-size:10.9px;transform:scaleX(1.0148);">Vaakakulma</span><span class="t" style="left:1503.85px;top:1134.17px;font-size:10.9px;transform:scaleX(1.0597);">23 gon</span><span class="t" style="left:1581.80px;top:1120.47px;font-size:10.9px;transform:scaleX(1.0272);">Pystykulma</span><span class="t" style="left:1592.60px;top:1134.17px;font-size:10.9px;transform:scaleX(1.0687);">25 gon</span><svg class="abs" style="left:1462.1px;top:1143.7px" width="120" height="120" viewBox="-60 -60 120 120"><defs><linearGradient id="dg1203" x1="0.15" y1="0" x2="0.7" y2="1"><stop offset="0" stop-color="#ffffff"/><stop offset=".45" stop-color="#f4f4f4"/><stop offset="1" stop-color="#d4d4d4"/></linearGradient></defs><path d="M45.5 0.0L54.0 0.0M33.2 33.2L37.5 37.5M0.0 45.5L0.0 54.0M-33.2 33.2L-37.5 37.5M-45.5 0.0L-54.0 0.0M-33.2 -33.2L-37.5 -37.5M-0.0 -45.5L-0.0 -54.0M33.2 -33.2L37.5 -37.5" stroke="#c4c4c4" stroke-width="1" fill="none"/><circle r="43.3" fill="url(#dg1203)" stroke="#7d7d7d" stroke-width="0.9"/><circle cx="10.2" cy="-27.3" r="7.3" fill="#e4e4e4" stroke="#a5a5a5" stroke-width="1"/></svg><div style="left:1606px;top:1151px;width:3px;height:105.5px;background:#e4e7e4;border:1px solid #d4d8d4;box-sizing:border-box;"></div><div style="left:1590.5px;top:1157px;width:3px;height:1px;background:#d2d2c6;"></div><div style="left:1623.5px;top:1157px;width:3px;height:1px;background:#d2d2c6;"></div><div style="left:1590.5px;top:1200.25px;width:3px;height:1px;background:#d2d2c6;"></div><div style="left:1623.5px;top:1200.25px;width:3px;height:1px;background:#d2d2c6;"></div><div style="left:1590.5px;top:1242.5px;width:3px;height:1px;background:#d2d2c6;"></div><div style="left:1623.5px;top:1242.5px;width:3px;height:1px;background:#d2d2c6;"></div><div style="left:1594px;top:1215px;width:28px;height:11px;background:#0078d7;"></div><div style="left:1458px;top:1279.5px;width:191px;height:164.0px;border:1px solid #e2e2e2;box-sizing:border-box;"></div><div style="left:1463px;top:1276.5px;width:49px;height:7px;background:#f0f0f0;"></div><span class="t" style="left:1465.10px;top:1275.27px;font-size:10.9px;transform:scaleX(1.0140);">Valaistus</span><span class="t" style="left:1491.50px;top:1297.97px;font-size:10.9px;transform:scaleX(1.0148);">Vaakakulma</span><span class="t" style="left:1507.00px;top:1311.67px;font-size:10.9px;transform:scaleX(1.0636);">3 gon</span><span class="t" style="left:1581.80px;top:1297.97px;font-size:10.9px;transform:scaleX(1.0272);">Pystykulma</span><span class="t" style="left:1592.60px;top:1311.67px;font-size:10.9px;transform:scaleX(1.0687);">55 gon</span><svg class="abs" style="left:1462.1px;top:1321.7px" width="120" height="120" viewBox="-60 -60 120 120"><defs><linearGradient id="dg1381" x1="0.15" y1="0" x2="0.7" y2="1"><stop offset="0" stop-color="#ffffff"/><stop offset=".45" stop-color="#f4f4f4"/><stop offset="1" stop-color="#d4d4d4"/></linearGradient></defs><path d="M45.5 0.0L54.0 0.0M33.2 33.2L37.5 37.5M0.0 45.5L0.0 54.0M-33.2 33.2L-37.5 37.5M-45.5 0.0L-54.0 0.0M-33.2 -33.2L-37.5 -37.5M-0.0 -45.5L-0.0 -54.0M33.2 -33.2L37.5 -37.5" stroke="#c4c4c4" stroke-width="1" fill="none"/><circle r="43.3" fill="url(#dg1381)" stroke="#7d7d7d" stroke-width="0.9"/><circle cx="1.1" cy="-29.7" r="7.3" fill="#e4e4e4" stroke="#a5a5a5" stroke-width="1"/></svg><div style="left:1606px;top:1329px;width:3px;height:105.5px;background:#e4e7e4;border:1px solid #d4d8d4;box-sizing:border-box;"></div><div style="left:1590.5px;top:1335px;width:3px;height:1px;background:#d2d2c6;"></div><div style="left:1623.5px;top:1335px;width:3px;height:1px;background:#d2d2c6;"></div><div style="left:1590.5px;top:1378.25px;width:3px;height:1px;background:#d2d2c6;"></div><div style="left:1623.5px;top:1378.25px;width:3px;height:1px;background:#d2d2c6;"></div><div style="left:1590.5px;top:1420.5px;width:3px;height:1px;background:#d2d2c6;"></div><div style="left:1623.5px;top:1420.5px;width:3px;height:1px;background:#d2d2c6;"></div><div style="left:1594px;top:1367px;width:28px;height:11px;background:#0078d7;"></div><div style="left:1458px;top:1450px;width:191px;height:102px;border:1px solid #e2e2e2;box-sizing:border-box;"></div><span class="t" style="left:1468.10px;top:1462.47px;font-size:10.9px;transform:scaleX(1.0350);">Yleisvalaistus: 68</span><div style="left:1578px;top:1465.8px;width:61px;height:3px;background:#e4e7e4;border:1px solid #d8dcd8;box-sizing:border-box;"></div><div style="left:1612px;top:1460.0px;width:11px;height:14.6px;background:#0078d7;"></div><span class="t" style="left:1468.10px;top:1484.17px;font-size:10.9px;transform:scaleX(1.0603);">Hajavalo: 60</span><div style="left:1578px;top:1487.6px;width:61px;height:3px;background:#e4e7e4;border:1px solid #d8dcd8;box-sizing:border-box;"></div><div style="left:1607.8px;top:1481.8px;width:11px;height:14.6px;background:#0078d7;"></div><div style="left:1468px;top:1504.5px;width:14px;height:14px;background:#fff;border:1px solid #333;box-sizing:border-box;"></div><span class="t" style="left:1488.10px;top:1507.07px;font-size:10.9px;transform:scaleX(1.0163);">Harmaa sävy</span><div style="left:1468px;top:1527px;width:14px;height:14px;background:#fff;border:1px solid #333;box-sizing:border-box;"></div><span class="t" style="left:1488.10px;top:1529.87px;font-size:10.9px;transform:scaleX(1.0087);">Seuraa katsojaa</span><div style="left:1458px;top:1559px;width:191px;height:349px;border:1px solid #e2e2e2;box-sizing:border-box;"></div><div style="left:1458px;top:1921.7px;width:191px;height:45.299999999999955px;border:1px solid #e2e2e2;box-sizing:border-box;"></div><div style="left:1463px;top:1918.7px;width:27.7px;height:7px;background:#f0f0f0;"></div><span class="t" style="left:1465.10px;top:1917.47px;font-size:10.9px;transform:scaleX(1.0138);">Malli</span><span class="t" style="left:1468.00px;top:1943.97px;font-size:10.9px;transform:scaleX(1.0432);">Z-Arvo</span><div style="left:1594px;top:1938px;width:45px;height:20px;background:#fff;border:1px solid #7a7a7a;box-sizing:border-box;"></div><span class="t" style="left:1596.30px;top:1943.97px;font-size:10.9px;transform:scaleX(1.0898);">3,0</span><svg class="abs" style="left:1628px;top:1939px" width="10" height="18" viewBox="0 0 10 18"><rect width="10" height="18" fill="#e6e6e6"/><rect y="0" width="10" height="9" fill="#dcdcdc" stroke="#bdbdbd" stroke-width=".6"/><path d="M2 6.3L5 3L8 6.3Z M2 11.5L5 15L8 11.5Z" fill="#111"/></svg><svg class="abs" style="left:347px;top:1063px" width="1097" height="914" viewBox="347 1063 1097 914"><defs><linearGradient id="fan1" gradientUnits="userSpaceOnUse" x1="960" y1="0" x2="1135" y2="0"><stop offset="0" stop-color="#a34906"/><stop offset=".12" stop-color="#ad4d08"/><stop offset=".45" stop-color="#bb540b"/><stop offset=".62" stop-color="#b8520a"/><stop offset=".8" stop-color="#ae4d08"/><stop offset="1" stop-color="#a84b07"/></linearGradient><linearGradient id="fan2" gradientUnits="userSpaceOnUse" x1="1290" y1="0" x2="1425" y2="0"><stop offset="0" stop-color="#a84b07"/><stop offset=".5" stop-color="#ae4e08"/><stop offset="1" stop-color="#b35109"/></linearGradient><linearGradient id="fan3" gradientUnits="userSpaceOnUse" x1="370" y1="0" x2="520" y2="0"><stop offset="0" stop-color="#ad4e08"/><stop offset=".6" stop-color="#a84b07"/><stop offset="1" stop-color="#a34906"/></linearGradient></defs><clipPath id="rimclip"><path d="M404.1 1460.9 L967.1 1245.3 C995.1 1234.6 1022 1231.6 1050 1231.6 C1078 1231.6 1100.3 1239 1126.3 1248 L1375.6 1335 C1418 1350 1447 1378 1394.8 1399.5 L820.4 1618.2 C785 1631.7 720 1633 678.4 1618.2 L425.2 1528 C380 1512 340 1483 404.1 1460.9Z"/></clipPath><path d="M372 1493 L521 1666 Q533 1686 552 1694 L678.4 1740.9 C720 1755 785 1752 820.4 1739 L1241.4 1575.9 Q1260 1568 1270 1556 L1421 1372 L1100 1300Z" fill="#823604"/><path d="M404.1 1460.9 L967.1 1245.3 C995.1 1234.6 1022 1231.6 1050 1231.6 C1078 1231.6 1100.3 1239 1126.3 1248 L1375.6 1335 C1418 1350 1447 1378 1394.8 1399.5 L820.4 1618.2 C785 1631.7 720 1633 678.4 1618.2 L425.2 1528 C380 1512 340 1483 404.1 1460.9Z" fill="#a34906"/><path d="M404.1 1460.9 L520 1417 L560 1576 L425.2 1528 C380 1512 340 1483 404.1 1460.9Z" fill="url(#fan3)"/><path d="M1110 1240 L1375.6 1335 C1418 1350 1447 1378 1394.8 1399.5 L1153.2 1490.8 L1122.5 1479.3 L1085 1466Z" fill="#a84b07" clip-path="url(#rimclip)"/><g clip-path="url(#rimclip)"><path d="M967.1 1237.3L980.9 1233.1L1002.4 1477.1L993.8 1478.7Z" fill="#a64a07"/><path d="M980.3 1233.1L994.8 1229.8L1010.5 1475.8L1001.8 1477.1Z" fill="#ab4c07"/><path d="M994.2 1229.8L1009.2 1227.2L1018.9 1474.8L1009.9 1475.8Z" fill="#b04e08"/><path d="M1008.6 1227.2L1024.0 1225.4L1027.3 1474.0L1018.3 1474.8Z" fill="#b45009"/><path d="M1023.4 1225.4L1038.8 1224.5L1035.9 1473.4L1026.7 1474.0Z" fill="#b8520a"/><path d="M1038.2 1224.5L1053.5 1224.3L1044.5 1473.0L1035.3 1473.4Z" fill="#bb530a"/><path d="M1052.9 1224.3L1067.9 1224.9L1053.1 1473.0L1043.9 1473.0Z" fill="#bc540b"/><path d="M1067.3 1224.9L1081.7 1226.3L1061.7 1473.2L1052.5 1473.0Z" fill="#ba530a"/><path d="M1081.1 1226.3L1094.7 1228.6L1070.1 1473.7L1061.1 1473.2Z" fill="#b7510a"/><path d="M1094.1 1228.6L1106.7 1231.6L1078.4 1474.4L1069.5 1473.7Z" fill="#b24f09"/><path d="M1106.1 1231.6L1117.5 1235.4L1086.6 1475.5L1077.8 1474.4Z" fill="#ad4d08"/><path d="M1116.9 1235.4L1126.9 1240.0L1094.5 1476.8L1086.0 1475.5Z" fill="#a94b07"/></g><path d="M1300 1308 L1375.6 1335 C1418 1350 1447 1378 1394.8 1399.5 L1290 1439Z" fill="url(#fan2)"/><path d="M643.9 1605.5 L976.7 1477 C996.7 1469.3 1026 1467.1 1051 1467.1 C1076 1467.1 1100.5 1471.2 1122.5 1479.3 L1153.2 1490.8 L820.4 1618.2 C785 1631.7 720 1633 678.4 1618.2Z" fill="#d95f0a"/><path d="M643.9 1605.5 L976.7 1477 C996.7 1469.3 1026 1467.1 1051 1467.1 C1076 1467.1 1100.5 1471.2 1122.5 1479.3 L1153.2 1490.8" fill="none" stroke="#3c3026" stroke-width="1"/><path d="M404.1 1460.9 L967.1 1245.3 C995.1 1234.6 1022 1231.6 1050 1231.6 C1078 1231.6 1100.3 1239 1126.3 1248 L1375.6 1335 C1418 1350 1447 1378 1394.8 1399.5 L820.4 1618.2 C785 1631.7 720 1633 678.4 1618.2 L425.2 1528 C380 1512 340 1483 404.1 1460.9Z" fill="none" stroke="#3c3026" stroke-width="1.1"/></svg><div class="dlg" style="left:1526px;top:239px;width:400px;height:426px;background:#f0f0f0;border:1px solid #0087c9;box-sizing:border-box;box-shadow:0 3px 19px rgba(0,0,0,.33);"></div><div style="left:1526px;top:239px;width:400px;height:44px;background:#0087c9;"></div><span class="t" style="left:1538.00px;top:255.20px;font-size:17.6px;color:#fff;transform:scaleX(1.0228);">Viistä / pyöristä</span><svg class="abs" style="left:1892px;top:253px" width="18" height="18" viewBox="0 0 18 18"><path d="M1.5 1.5L16 16M16 1.5L1.5 16" stroke="#fff" stroke-width="1.3" fill="none"/></svg><div style="left:1537px;top:295px;width:268px;height:221px;border:1px solid #a0a0a0;box-sizing:border-box;"></div><div style="left:1537px;top:523px;width:268px;height:131px;border:1px solid #a0a0a0;box-sizing:border-box;"></div><svg class="abs" style="left:1544.2px;top:302.8px" width="20" height="20"><circle cx="10" cy="10" r="8.7" fill="#fff" stroke="#333" stroke-width="1.2"/></svg><span class="t" style="left:1569.40px;top:306.03px;font-size:15.8px;transform:scaleX(0.9702);">Viistä</span><span class="t" style="left:1545.60px;top:338.53px;font-size:15.8px;transform:scaleX(1.0146);">A-pituus</span><div style="left:1617px;top:332px;width:99px;height:27px;background:#fff;border:1px solid #7a7a7a;box-sizing:border-box;"></div><span class="t" style="left:1624.50px;top:338.03px;font-size:15.8px;transform:scaleX(1.0077);">1.0000</span><svg class="abs" style="left:1696px;top:340px" width="14" height="10"><path d="M1.5 2L6.8 7.3L12 2" stroke="#444" stroke-width="1.2" fill="none"/></svg><span class="t" style="left:1545.60px;top:376.93px;font-size:15.8px;transform:scaleX(0.9905);">B-pituus</span><div style="left:1617px;top:370px;width:99px;height:27px;background:#fff;border:1px solid #7a7a7a;box-sizing:border-box;"></div><span class="t" style="left:1624.50px;top:376.03px;font-size:15.8px;transform:scaleX(1.0077);">1.0000</span><svg class="abs" style="left:1696px;top:378px" width="14" height="10"><path d="M1.5 2L6.8 7.3L12 2" stroke="#444" stroke-width="1.2" fill="none"/></svg><svg class="abs" style="left:1725px;top:355px" width="21" height="21"><rect x="0.6" y="0.6" width="18.8" height="18.8" fill="#fff" stroke="#333" stroke-width="1.2"/></svg><span class="t" style="left:1748.90px;top:357.73px;font-size:15.8px;transform:scaleX(1.0119);">Lukittu</span><div style="left:1618px;top:409px;width:97px;height:27px;background:#e1e1e1;border:1px solid #adadad;box-sizing:border-box;"></div><span class="t" style="left:1642.25px;top:416.23px;font-size:15.8px;transform:scaleX(1.0101);">Vaihda</span><svg class="abs" style="left:1544.2px;top:445.8px" width="20" height="20"><circle cx="10" cy="10" r="8.7" fill="#fff" stroke="#333" stroke-width="1.2"/><circle cx="10" cy="10" r="4.4" fill="#000"/></svg><span class="t" style="left:1569.40px;top:449.63px;font-size:15.8px;transform:scaleX(0.9688);">Pyöristä</span><span class="t" style="left:1545.60px;top:482.43px;font-size:15.8px;transform:scaleX(0.8942);">Säde</span><div style="left:1617px;top:474px;width:99px;height:27px;background:#fff;border:1px solid #7a7a7a;box-sizing:border-box;"></div><span class="t" style="left:1624.50px;top:480.03px;font-size:15.8px;transform:scaleX(1.0077);">5.0000</span><svg class="abs" style="left:1696px;top:482px" width="14" height="10"><path d="M1.5 2L6.8 7.3L12 2" stroke="#444" stroke-width="1.2" fill="none"/></svg><svg class="abs" style="left:1545px;top:530.5px" width="21" height="21"><rect x="0.6" y="0.6" width="18.8" height="18.8" fill="#fff" stroke="#333" stroke-width="1.2"/><path d="M4 9.5L8 13.5L15.5 5" stroke="#000" stroke-width="1.6" fill="none"/></svg><span class="t" style="left:1569.40px;top:534.83px;font-size:15.8px;transform:scaleX(0.9373);">Kaikki</span><svg class="abs" style="left:1545px;top:559.8px" width="21" height="21"><rect x="0.6" y="0.6" width="18.8" height="18.8" fill="#fff" stroke="#333" stroke-width="1.2"/></svg><span class="t" style="left:1569.40px;top:563.73px;font-size:15.8px;transform:scaleX(0.9929);">Ei sulkupistettä</span><svg class="abs" style="left:1545px;top:587.8px" width="21" height="21"><rect x="0.6" y="0.6" width="18.8" height="18.8" fill="#fff" stroke="#333" stroke-width="1.2"/></svg><span class="t" style="left:1569.40px;top:591.33px;font-size:15.8px;transform:scaleX(1.0133);">Ei ulkokulmia</span><div style="left:1546px;top:618px;width:97px;height:27px;background:#e1e1e1;border:1px solid #adadad;box-sizing:border-box;"></div><span class="t" style="left:1562.75px;top:625.23px;font-size:15.8px;transform:scaleX(0.9769);">Edellinen</span><div style="left:1654px;top:618px;width:97px;height:27px;background:#e1e1e1;border:1px solid #adadad;box-sizing:border-box;"></div><span class="t" style="left:1670.50px;top:625.23px;font-size:15.8px;transform:scaleX(0.9464);">Seuraava</span><div style="left:1816px;top:295px;width:97px;height:27px;background:#e1e1e1;border:2px solid #0078d7;box-sizing:border-box;"></div><span class="t" style="left:1839.50px;top:302.23px;font-size:15.8px;">Suorita</span><div style="left:1816px;top:333px;width:97px;height:27px;background:#e1e1e1;border:1px solid #adadad;box-sizing:border-box;"></div><span class="t" style="left:1847.00px;top:340.23px;font-size:15.8px;transform:scaleX(0.9960);">Sulje</span><div style="left:1816px;top:371px;width:97px;height:27px;background:#e1e1e1;border:1px solid #adadad;box-sizing:border-box;"></div><span class="t" style="left:1847.50px;top:378.23px;font-size:15.8px;transform:scaleX(1.0187);">Ohje</span>
</body></html>
